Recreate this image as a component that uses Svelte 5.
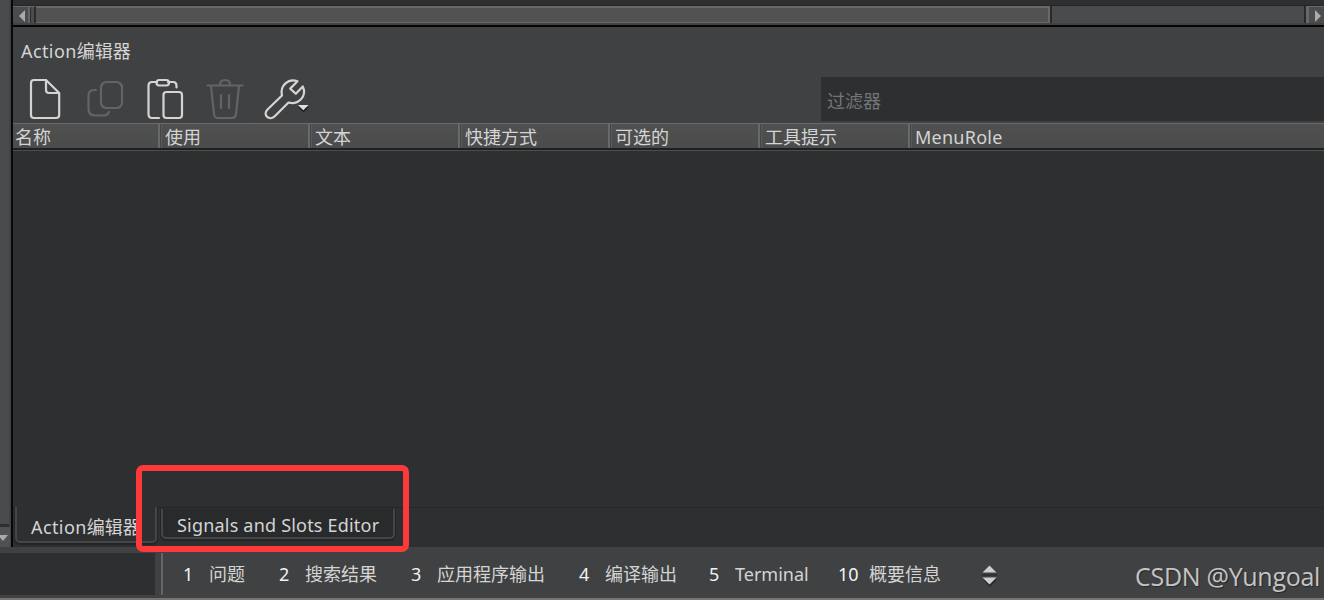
<script lang="ts">
  const columns = ['名称', '使用', '文本', '快捷方式', '可选的', '工具提示', 'MenuRole'];

  const panes = [
    { key: 1, label: '问题', width: 96 },
    { key: 2, label: '搜索结果', width: 132 },
    { key: 3, label: '应用程序输出', width: 168 },
    { key: 4, label: '编译输出', width: 130 },
    { key: 5, label: 'Terminal', width: 129 },
    { key: 10, label: '概要信息', width: 144 },
  ];

  let filter = $state('');
</script>

<div class="window">
  <div class="workspace">
    <div class="side">
      <div class="side-track"></div>
      <div class="side-down">
        <svg width="9" height="7" viewBox="0 0 9 7"><path d="M-2 0H8L3 6z" fill="#aaa" /></svg>
      </div>
    </div>

    <div class="main">
      <div class="scrollbar">
        <div class="arrow left">
          <svg width="7" height="12" viewBox="0 0 7 12"><path d="M6 0v12L0 6z" fill="#aaa" /></svg>
        </div>
        <div class="thumb"></div>
        <div class="track"></div>
        <div class="arrow right">
          <svg width="7" height="12" viewBox="0 0 7 12"><path d="M0 0v12l6-6z" fill="#aaa" /></svg>
        </div>
      </div>

      <div class="title"><span class="en">Action</span>编辑器</div>

      <div class="toolbar">
        <div class="tools">
          <svg width="300" height="46" viewBox="13 77 300 46" fill="none" stroke="#d4d4d4" stroke-width="2.2" stroke-linejoin="round" stroke-linecap="round">
            <path d="M34 80H46L59.200 93V115Q59.200 118 56 118H34Q31 118 31 115V83Q31 80 34 80Z" />
            <path d="M46 80V90Q46 93 49 93H59" />
            <g stroke="#636466">
              <rect x="101" y="82" width="21" height="26" rx="5.500" />
              <path d="M96 90H94Q88.500 90 88.500 96V109Q88.500 115.500 95 115.500H103Q107.500 115.500 109 112" />
            </g>
            <path d="M157 82H152Q148.500 82 148.500 86V114Q148.500 118 152 118H159M168 82H173Q176.500 82 176.500 86V87.500" />
            <rect x="156.500" y="80" width="12.500" height="5.500" rx="2.700" />
            <rect x="163.500" y="92" width="18.500" height="26" rx="3" />
            <g stroke="#636466">
              <path d="M207.500 85.500H242.500M211 86L214 114Q214.500 118 218 118H232Q235.500 118 236 114L239 86M220 85Q220 80 225 80Q230 80 230 85M221 95V108M229 95V108" />
            </g>
            <path d="M297.500 81.300C288.500 77.500 279.500 86 282 95.500L267.500 109.500C262 115 269.500 121.500 275 116L288.500 102.500C298 105 307.500 96.500 302.800 86.500L295.800 93.800L290.200 88.600Z" />
            <path d="M298 107h11l-5.500 5.500z" fill="#222" stroke="none" />
            <path d="M298 105h10.500l-5.200 5.200z" fill="#e0e0e0" stroke="none" />
          </svg>
        </div>
        <input class="filter" placeholder="过滤器" aria-label="过滤器" bind:value={filter} />
      </div>

      <div class="header">
        {#each columns as column, i}
          <div class="column" class:last={i === columns.length - 1}>{column}</div>
        {/each}
      </div>

      <div class="list"></div>

      <div class="tabs">
        <div class="tab active"><span class="en">Action</span>编辑器</div>
        <div class="tab"><span class="signals">Signals and Slots Editor</span></div>
      </div>
    </div>
  </div>

  <div class="status">
    <div class="locator"></div>
    <div class="divider"></div>
    <div class="panes">
      {#each panes as pane}
        <div class="pane" class:wide={pane.key === 10} style="width: {pane.width}px">
          <span class="key">{pane.key}</span><span>{pane.label}</span>
        </div>
      {/each}
      <svg class="spin" width="16" height="22" viewBox="0 0 16 22">
        <path d="M0 9h15v2H0z" fill="#303133" />
        <path d="M1 14L8 22l7-8z" fill="#242527" />
        <path d="M.500 7.500L7.500 .500l7 7zM.500 12.500h14l-7 7z" fill="#cfcfcf" />
      </svg>
    </div>
  </div>

  <div class="highlight"></div>
  <div class="watermark">CSDN @Yungoal</div>
</div>

<style>
  :global(body) {
    margin: 0;
    background: #2e2f31;
  }

  .window {
    position: relative;
    display: flex;
    flex-direction: column;
    width: 1324px;
    height: 600px;
    overflow: hidden;
    box-sizing: border-box;
    border-bottom: 2px solid #777474;
    background: #404142;
    color: #d4d4d4;
    font-family: 'Noto Sans', 'Noto Sans CJK SC', sans-serif;
    font-size: 18px;
    line-height: 24px;
    white-space: nowrap;
  }

  .window * {
    box-sizing: border-box;
  }

  .workspace {
    display: flex;
    height: 547px;
  }

  .side {
    display: flex;
    flex-direction: column;
    width: 13px;
    border-right: 2px solid #080808;
    background: #424344;
  }

  .side-track {
    height: 527px;
    width: 9px;
    background: #4a4b4c;
    border-bottom: 3px solid #2e2f30;
  }

  .side-down {
    flex: 1;
    width: 10px;
    padding-top: 8px;
    background: #505152;
  }

  .side-down svg {
    display: block;
  }

  .main {
    display: flex;
    flex: 1;
    flex-direction: column;
    min-width: 0;
    background: #404142;
  }

  .scrollbar {
    display: flex;
    height: 27px;
    padding-top: 6px;
    border-bottom: 2px solid #050505;
    background: linear-gradient(#2e2f31 5px, #252628 5px, #252628 6px, #414243 6px);
  }

  .arrow {
    display: flex;
    align-items: center;
    height: 17px;
    padding-top: 2px;
    background: #4b4c4d;
    border-top: 1px solid #69696a;
  }

  .left {
    width: 23px;
    padding-left: 6px;
    border-right: 2px solid #2b2c2d;
    background: linear-gradient(90deg, #4b4c4d 15px, #646566 15px, #646566 17px, #2b2c2d 17px, #2b2c2d 18px, #4b4c4d 18px);
  }

  .right {
    width: 18px;
    padding-left: 6px;
    border-left: 3px solid #67686a;
  }

  .thumb {
    width: 1014px;
    height: 17px;
    border: 1px solid #69696a;
    border-width: 2px 2px 1px 0;
    background: #525253;
  }

  .track {
    flex: 1;
    height: 17px;
    border: solid #292a2b;
    border-width: 0 2px;
    background: #4a4b4c;
  }

  .title {
    height: 50px;
    padding: 12px 0 0 8px;
  }

  .en {
    letter-spacing: .4px;
  }

  .toolbar {
    display: flex;
    height: 46px;
    justify-content: space-between;
  }

  .tools svg {
    display: block;
  }

  .filter {
    width: 503px;
    height: 44px;
    padding: 3px 6px 0;
    border: 0;
    outline: 0;
    background: #2e2f31;
    color: #d4d4d4;
    font: inherit;
  }

  .filter::placeholder {
    color: #747577;
    opacity: 1;
  }

  .header {
    display: flex;
    height: 28px;
    border-top: 1px solid #69696a;
    border-bottom: 1px solid #4c4d4e;
    background: linear-gradient(#505050, #4a4b4b 24px, #1f2021 24px);
  }

  .column {
    width: 150px;
    padding: 1px 0 0 3px;
    background: linear-gradient(90deg, transparent 146px, #68696a 146px, #68696a 148px, #444546 148px, #444546 149px, #58595a 149px) no-repeat 0 0 / 100% 24px;
  }

  .column:first-child {
    width: 149px;
    padding-left: 2px;
    background-position: -1px 0;
    background-size: 150px 24px;
  }

  .column.last {
    flex: 1;
    background: none;
    letter-spacing: .25px;
  }

  .list {
    flex: 1;
    background: #2e2f31;
  }

  .tabs {
    display: flex;
    align-items: flex-start;
    height: 40px;
    padding-left: 2px;
    border-top: 1px solid #252627;
    background: #2e2f31;
  }

  .tab {
    width: 234px;
    height: 30px;
    margin: 1px 0 0 4px;
    padding: 4px 0 0 14px;
    border: 2px solid #454647;
    border-top: 0;
    border-radius: 0 0 5px 5px;
    background: #292a2b;
    box-shadow: 0 1px 0 1px #242527;
  }

  .tab.active {
    width: 142px;
    height: 36px;
    margin: -1px 0 0;
    padding-top: 8px;
    background: #2e2f31;
  }

  .signals {
    letter-spacing: .2px;
  }

  .status {
    display: flex;
    flex: 1;
    padding-top: 6px;
  }

  .locator {
    width: 155px;
    height: 42px;
    background: #2e2f31;
  }

  .divider {
    width: 2px;
    height: 42px;
    margin-left: 6px;
    background: #646566;
  }

  .panes {
    display: flex;
    align-items: center;
    height: 42px;
    padding-left: 20px;
  }

  .pane {
    display: flex;
  }

  .key {
    width: 26px;
    color: #f3f3f3;
  }

  .wide .key {
    width: 31px;
  }

  .spin {
    margin-top: 4px;
  }

  .highlight {
    position: absolute;
    left: 136px;
    top: 465px;
    width: 273px;
    height: 87px;
    border: 6px solid #fd3a39;
    border-radius: 7px;
  }

  .watermark {
    position: absolute;
    right: 4px;
    bottom: 7px;
    color: #c4c4c4;
    font-family: 'Open Sans', sans-serif;
    font-size: 25px;
    line-height: 30px;
    letter-spacing: -.3px;
    text-shadow: 1px 1px 1px #292929;
  }
</style>
